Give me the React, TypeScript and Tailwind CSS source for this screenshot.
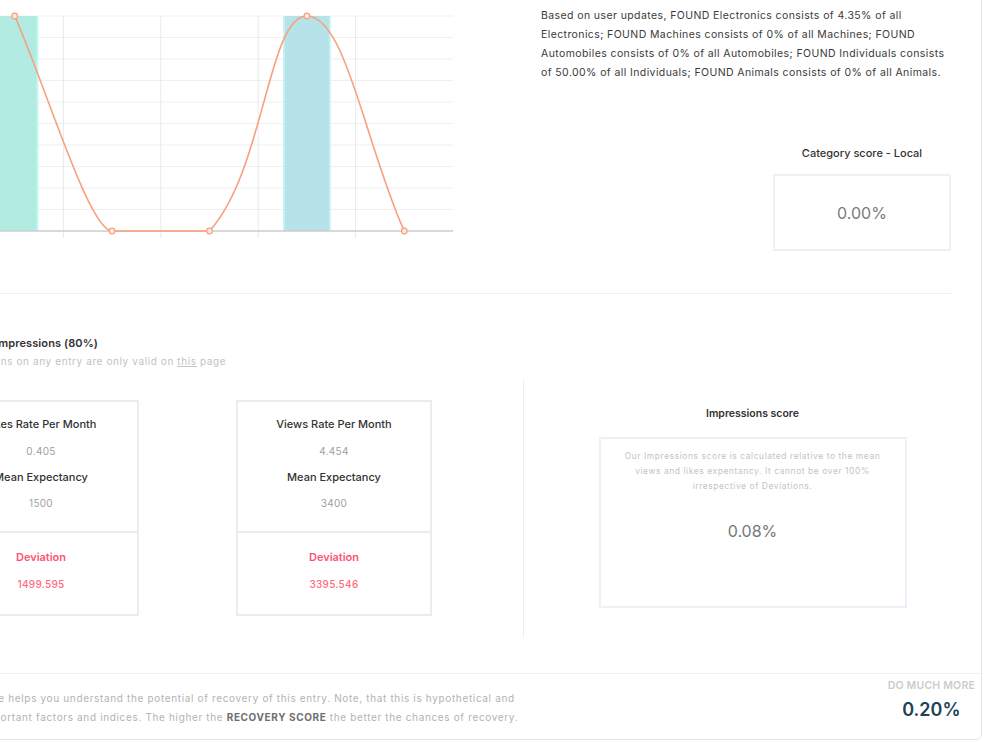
import React from "react";

const gridYs = Array.from({ length: 11 }, (_, k) => 16 + k * 21.5);
const vLines = [23, 120.4, 217.8, 315.2, 412.6];
const pts: [number, number][] = [
  [71.7, 16],
  [169.1, 231],
  [266.5, 231],
  [363.9, 16],
  [461.3, 231],
];

function Chart() {
  const d =
    "M71.7,16 C102,84 146,231 169.1,231 L266.5,231 C321.6,170.2 324.9,16 363.9,16 C402.9,16 422.3,145 461.3,231";
  return (
    <svg width={510} height={242} className="block shrink-0" viewBox="0 0 510 242">
      {gridYs.slice(0, 10).map((y) => (
        <line key={y} x1={0} x2={510} y1={y} y2={y} stroke="#efefef" strokeWidth={1} />
      ))}
      {vLines.map((x) => (
        <line key={x} x1={x} x2={x} y1={16} y2={238} stroke="#e9e9e9" strokeWidth={1} />
      ))}
      <rect x={48.2} y={16} width={47} height={215} fill="#b2ebe1" />
      <rect x={93.7} y={16} width={1.6} height={215} fill="#c4fbf4" />
      <rect x={340.4} y={16} width={47} height={215} fill="#b6e2ea" />
      <rect x={340.4} y={16} width={1.4} height={215} fill="#c2f4f7" />
      <rect x={386} y={16} width={1.6} height={215} fill="#c2f4f7" />
      <line x1={0} x2={510} y1={231} y2={231} stroke="#cdcdcd" strokeWidth={1.3} />
      <path d={d} fill="none" stroke="#f8a07c" strokeWidth={1.6} />
      {pts.map(([x, y]) => (
        <circle key={x} cx={x} cy={y} r={2.8} fill="#fde9df" stroke="#f8a07c" strokeWidth={1.2} />
      ))}
    </svg>
  );
}

function StatCard({
  label,
  value,
  mean,
  dev,
}: {
  label: string;
  value: string;
  mean: string;
  dev: string;
}) {
  return (
    <div className="w-[196px] h-[216px] shrink-0 border-2 border-[#ececec] flex flex-col">
      <div className="h-[131px] border-b-2 border-[#ececec] flex flex-col items-center pt-[15px] whitespace-nowrap">
        <div className="text-[11px] leading-[14px] font-medium text-[#333333]">{label}</div>
        <div className="mt-[13px] text-[10px] leading-[14px] tracking-[0.3px] text-[#a0a0a0]">{value}</div>
        <div className="mt-[12px] text-[11px] leading-[14px] font-medium text-[#333333]">Mean Expectancy</div>
        <div className="mt-[12px] text-[10px] leading-[14px] tracking-[0.3px] text-[#a0a0a0]">{mean}</div>
      </div>
      <div className="flex flex-col items-center pt-[17px]">
        <div className="text-[11px] leading-[14px] font-semibold text-[#fb5474]">Deviation</div>
        <div className="mt-[13px] text-[10px] leading-[14px] tracking-[0.3px] font-medium text-[#ff6a7c]">{dev}</div>
      </div>
    </div>
  );
}

export default function App() {
  return (
    <div className="w-[1000px] h-[750px] overflow-hidden bg-white font-['Inter','Noto_Sans',sans-serif]">
      <div className="ml-[-90px] mt-[-41px] w-[1072px] border border-[#e4e4e4] rounded-[6px] bg-white">
        <div className="pl-[32px] pr-[30px] pt-[40px]">
          {/* Top section */}
          <div className="flex">
            <Chart />
            <div className="ml-[88px] flex-1 flex flex-col">
              <div className="mt-[6px] text-[10.5px] leading-[19px] tracking-[0.4px] text-[#3a3a3a] whitespace-nowrap">
                <div>Based on user updates, FOUND Electronics consists of 4.35% of all</div>
                <div>Electronics; FOUND Machines consists of 0% of all Machines; FOUND</div>
                <div>Automobiles consists of 0% of all Automobiles; FOUND Individuals consists</div>
                <div>of 50.00% of all Individuals; FOUND Animals consists of 0% of all Animals.</div>
              </div>
              <div className="mt-[64px] self-end w-[178px] flex flex-col items-center">
                <div className="text-[11px] leading-[14px] font-medium text-[#333333] whitespace-nowrap">
                  Category score - Local
                </div>
                <div className="mt-[14px] w-[178px] h-[77px] border-2 border-[#eef0f7] flex items-center justify-center text-[16px] text-[#7a7a7a]">
                  0.00%
                </div>
              </div>
            </div>
          </div>

          <div className="mt-[42px] border-t border-[#efefef]" />

          {/* Impressions */}
          <div className="mt-[41px] pl-[6px] whitespace-nowrap">
            <div className="text-[11px] leading-[16px] font-semibold tracking-[0.1px] text-[#333333]">
              Views &amp; Impressions (80%)
            </div>
            <div className="mt-[3px] ml-[-1px] text-[10px] leading-[14px] tracking-[0.6px] text-[#c2c2c2]">
              Calculations on any entry are only valid on <span className="underline">this</span> page
            </div>
          </div>

          <div className="mt-[12px] flex h-[258px]">
            <div className="w-[580px] shrink-0 flex items-start pt-[20px] gap-[97px]">
              <StatCard label="Likes Rate Per Month" value="0.405" mean="1500" dev="1499.595" />
              <StatCard label="Views Rate Per Month" value="4.454" mean="3400" dev="3395.546" />
            </div>
            <div className="flex-1 mr-[-30px] border-l border-[#efefef] flex flex-col items-center pt-[27px]">
              <div className="text-[10.5px] leading-[14px] font-semibold text-[#333333]">Impressions score</div>
              <div className="mt-[16px] w-[308px] h-[171px] border-2 border-[#eef0f7] flex flex-col items-center pt-[10px]">
                <div className="text-[8.5px] leading-[15px] tracking-[0.55px] text-[#c4c4c4] text-center whitespace-nowrap">
                  <div>Our Impressions score is calculated relative to the mean</div>
                  <div>views and likes expentancy. It cannot be over 100%</div>
                  <div>irrespective of Deviations.</div>
                </div>
                <div className="mt-[27px] text-[16px] leading-[20px] text-[#777777]">0.08%</div>
              </div>
            </div>
          </div>
        </div>

        {/* Footer */}
        <div className="mt-[35px] h-[66px] border-t border-[#efefef] flex justify-between">
          <div className="pl-[38px] pt-[15px] text-[10px] leading-[19px] tracking-[0.65px] text-[#b3b3b3] whitespace-nowrap">
            <div>This score helps you understand the potential of recovery of this entry. Note, that this is hypothetical and</div>
            <div>
              omits important factors and indices. The higher the{" "}
              <span className="font-bold tracking-[0.6px] text-[#6e6e6e]">RECOVERY SCORE</span> the better the chances of recovery.
            </div>
          </div>
          <div className="pr-[6px] pt-[6px] flex flex-col items-center">
            <div className="text-[10.5px] leading-[12px] font-semibold text-[#cccccc] tracking-[0.2px]">DO MUCH MORE</div>
            <div className="mt-[7px] text-[18px] leading-[22px] font-semibold text-[#1e4357]">0.20%</div>
          </div>
        </div>
      </div>
    </div>
  );
}
